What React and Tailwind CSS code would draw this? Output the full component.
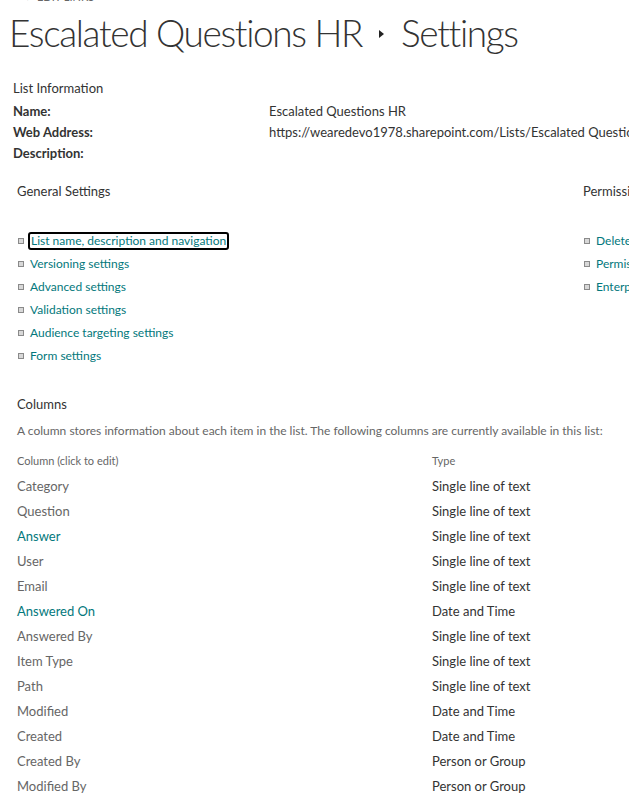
import React from 'react';

const generalLinks = [
    'List name, description and navigation',
    'Versioning settings',
    'Advanced settings',
    'Validation settings',
    'Audience targeting settings',
    'Form settings',
];

const permissionLinks = ['Delete this list', 'Permissions for this list', 'Enterprise Metadata and Keywords Settings'];

const columns = [
    { name: 'Category', type: 'Single line of text' },
    { name: 'Question', type: 'Single line of text' },
    { name: 'Answer', type: 'Single line of text', link: true },
    { name: 'User', type: 'Single line of text' },
    { name: 'Email', type: 'Single line of text' },
    { name: 'Answered On', type: 'Date and Time', link: true },
    { name: 'Answered By', type: 'Single line of text' },
    { name: 'Item Type', type: 'Single line of text' },
    { name: 'Path', type: 'Single line of text' },
    { name: 'Modified', type: 'Date and Time' },
    { name: 'Created', type: 'Date and Time' },
    { name: 'Created By', type: 'Person or Group' },
    { name: 'Modified By', type: 'Person or Group' },
];

function Bullet() {
    return <span className="inline-block w-[6px] h-[6px] border border-[#8a8a8a] bg-[#d8d8d8] shrink-0" />;
}

function LinkItem({ label, focused }) {
    return (
        <li className="flex items-center h-[23px] gap-[6px] text-[12px]">
            <Bullet />
            <span className={focused ? 'text-[#03787c] border-2 border-black rounded-[3px] px-[1px] leading-[14px] -ml-[2px]' : 'text-[#03787c]'}>
                {label}
            </span>
        </li>
    );
}

export default function App() {
    return (
        <div className="w-[629px] h-[810px] overflow-hidden bg-white text-[#333] text-[13px]" style={{ fontFamily: 'Lato, "Open Sans", sans-serif' }}>
            {/* Edit links strip, mostly scrolled off */}
            <div className="h-[4px] overflow-hidden flex items-end pl-[20px] gap-[8px] text-[11px] text-[#666]">
                <span className="leading-[14px]">✎</span>
                <span className="leading-[14px]">EDIT LINKS</span>
            </div>

            {/* Page title */}
            <h1 className="flex items-center h-[56px] pl-[9px] text-[37px] font-light text-[#333] leading-none whitespace-nowrap tracking-[-1.35px]">
                <span>Escalated Questions HR</span>
                <span className="mx-[17px] w-0 h-0 border-y-[4px] border-y-transparent border-l-[5px] border-l-[#222] mt-[4px]" />
                <span>Settings</span>
            </h1>

            {/* List information */}
            <div className="pl-[13px] mt-[18px]">
                <div className="h-[21px] flex items-center">List Information</div>
                <div className="grid grid-cols-[256px_1fr] whitespace-nowrap mt-[2px]">
                    <div className="h-[21px] flex items-center font-bold">Name:</div>
                    <div className="h-[21px] flex items-center">Escalated Questions HR</div>
                    <div className="h-[21px] flex items-center font-bold">Web Address:</div>
                    <div className="h-[21px] flex items-center">https://wearedevo1978.sharepoint.com/Lists/Escalated Questions HR/AllItems.aspx</div>
                    <div className="h-[21px] flex items-center font-bold">Description:</div>
                    <div className="h-[21px]" />
                </div>
            </div>

            {/* Settings groups */}
            <div className="flex pl-[17px] mt-[17px] whitespace-nowrap">
                <div className="w-[566px] shrink-0">
                    <div className="h-[21px] flex items-center">General Settings</div>
                    <ul className="mt-[27px] pl-[1px]">
                        {generalLinks.map((l, i) => (
                            <LinkItem key={l} label={l} focused={i === 0} />
                        ))}
                    </ul>
                </div>
                <div className="shrink-0">
                    <div className="h-[21px] flex items-center">Permissions and Management</div>
                    <ul className="mt-[27px] pl-[1px]">
                        {permissionLinks.map((l) => (
                            <LinkItem key={l} label={l} />
                        ))}
                    </ul>
                </div>
            </div>

            {/* Columns */}
            <div className="pl-[17px] mt-[27px] whitespace-nowrap">
                <div className="h-[21px] flex items-center">Columns</div>
                <p className="h-[21px] mt-[5px] flex items-center text-[12px] text-[#666]">
                    A column stores information about each item in the list. The following columns are currently available in this list:
                </p>
                <div className="grid grid-cols-[415px_1fr] mt-[8px]">
                    <div className="h-[25px] flex items-center text-[11px] text-[#666]">Column (click to edit)</div>
                    <div className="h-[25px] flex items-center text-[11px] text-[#666]">Type</div>
                    {columns.map((c) => (
                        <React.Fragment key={c.name}>
                            <div className={`h-[25px] flex items-center ${c.link ? 'text-[#03787c]' : 'text-[#666]'}`}>{c.name}</div>
                            <div className="h-[25px] flex items-center text-[#333]">{c.type}</div>
                        </React.Fragment>
                    ))}
                </div>
            </div>
        </div>
    );
}
